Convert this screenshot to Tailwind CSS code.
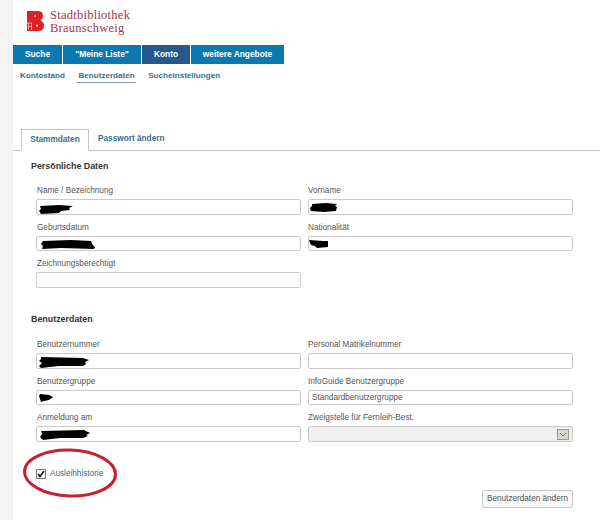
<!DOCTYPE html>
<html lang="de">
<head>
    <meta charset="utf-8" />
    <title>Benutzerdaten</title>
    <script src="https://cdn.jsdelivr.net/npm/@tailwindcss/browser@4"></script>
</head>
<body class="bg-[#f3f3f3] font-['Liberation_Sans',Arial,sans-serif]">
    <div class="relative ml-[13px] w-[587px] h-[520px] overflow-hidden bg-white">
        <!-- Logo -->
        <div class="flex h-[45px] pl-[14px] pt-[9px] gap-[6px]">
            <svg class="mt-[2px]" width="17" height="20" viewBox="0 0 17 20">
                <path fill="#dc2229" d="M0 0H11Q16 0 16 5Q16 8 13.500 9.500Q17 11 17 14.500Q17 20 11 20H0Z" />
                <rect x="7.500" y="4" width="1.500" height="2" fill="#f6b8ba" />
                <path fill="none" stroke="#f8d0d2" stroke-width="0.700" d="M0 12H5M1.500 12V19M4.500 12V19M1.500 15.500H5" />
                <rect x="9" y="13.500" width="2" height="2" fill="#f6b8ba" />
            </svg>
            <div class="font-['Liberation_Serif',serif] text-[12.500px] leading-[13px] tracking-[0.25px] text-[#a03848]">
                <div>Stadtbibliothek</div>
                <div>Braunschweig</div>
            </div>
        </div>

        <!-- Hauptnavigation -->
        <nav class="flex h-[19px] gap-px text-[8.400px] leading-[19px] font-bold text-center text-white">
            <a class="w-[49px] bg-[#0b79b0]">Suche</a>
            <a class="w-[78px] bg-[#0b79b0]">"Meine Liste"</a>
            <a class="w-[48px] bg-[#25598a]">Konto</a>
            <a class="w-[93px] bg-[#0b79b0]">weitere Angebote</a>
        </nav>

        <!-- Unternavigation -->
        <div class="flex h-[65px] pl-[7px] pt-[7px] gap-[12.500px] text-[8.100px] leading-[10px] font-bold text-[#33708f]">
            <a>Kontostand</a>
            <a class="h-[12px] border-b border-[#8a9aa3] px-px">Benutzerdaten</a>
            <a>Sucheinstellungen</a>
        </div>

        <!-- Tabs -->
        <div class="flex h-[22px] pl-[8px] border-b border-[#c4c4c4] text-[8.250px] leading-[20px] font-bold text-[#33708f]">
            <a class="w-[68px] h-[22px] border border-b-white border-[#c4c4c4] text-center">Stammdaten</a>
            <a class="ml-[9px]">Passwort ändern</a>
        </div>

        <section class="pl-[18px] pt-[9px]">
            <h2 class="h-[18px] text-[8.900px] leading-[12px] font-bold text-[#333]">Persönliche Daten</h2>
            <div class="grid grid-cols-[265px_265px] gap-x-[7px] pl-[5px] text-[8.200px] text-[#555]">
                <div class="relative">
                    <label class="block h-[21px] pt-[7px] pl-px leading-[11px]">Name / Bezeichnung</label>
                    <input class="block w-full h-[16px] border border-[#c9c9c9] rounded-[2px] bg-white" type="text" />
                    <svg class="absolute left-[3px] top-[27px]" width="35" height="9" viewBox="0 0 35 9"><path d="M1 1L20 0L34 1L30 3L31 5L22 6L20 8L2 9L0 6L2 4Z" /></svg>
                </div>
                <div class="relative">
                    <label class="block h-[21px] pt-[7px] leading-[11px]">Vorname</label>
                    <input class="block w-full h-[16px] border border-[#c9c9c9] rounded-[2px] bg-white" type="text" />
                    <svg class="absolute left-[2px] top-[25px]" width="28" height="9" viewBox="0 0 28 9"><path d="M2 1L16 0L27 1L25 3L27 4L26 8L14 9L1 8L0 5L2 3Z" /></svg>
                </div>
                <div class="relative">
                    <label class="block h-[21px] pt-[7px] pl-px leading-[11px]">Geburtsdatum</label>
                    <input class="block w-full h-[15px] border border-[#c9c9c9] rounded-[2px] bg-white" type="text" />
                    <svg class="absolute left-[5px] top-[25px]" width="54" height="9" viewBox="0 0 54 9"><path d="M2 1L30 0L50 1L51 4L54 7L53 9L20 8L1 9L2 6L0 4Z" /></svg>
                </div>
                <div class="relative">
                    <label class="block h-[21px] pt-[7px] leading-[11px]">Nationalität</label>
                    <input class="block w-full h-[15px] border border-[#c9c9c9] rounded-[2px] bg-white" type="text" />
                    <svg class="absolute left-px top-[25px]" width="20" height="8" viewBox="0 0 20 8"><path d="M0 0L14 1L19 1L19 7L8 8L6 6L2 5L1 3Z" /></svg>
                </div>
                <div>
                    <label class="block h-[21px] pt-[7px] pl-px leading-[11px]">Zeichnungsberechtigt</label>
                    <input class="block w-full h-[16px] border border-[#c9c9c9] rounded-[2px] bg-white" type="text" />
                </div>
            </div>
        </section>

        <section class="pl-[18px] pt-[26px]">
            <h2 class="h-[18px] text-[8.900px] leading-[11px] font-bold text-[#333]">Benutzerdaten</h2>
            <div class="grid grid-cols-[265px_265px] gap-x-[7px] pl-[5px] text-[8.200px] text-[#555]">
                <div class="relative">
                    <label class="block h-[21px] pt-[7px] pl-px leading-[11px]">Benutzernummer</label>
                    <input class="block w-full h-[16px] border border-[#c9c9c9] rounded-[2px] bg-white" type="text" />
                    <svg class="absolute left-[3px] top-[25px]" width="50" height="11" viewBox="0 0 50 11"><path d="M2 0L44 1L50 3L46 5L47 7L44 9L20 9L2 11L0 9L3 6L0 4L2 2Z" /></svg>
                </div>
                <div>
                    <label class="block h-[21px] pt-[7px] leading-[11px]">Personal Matrikelnummer</label>
                    <input class="block w-full h-[16px] border border-[#c9c9c9] rounded-[2px] bg-white" type="text" />
                </div>
                <div class="relative">
                    <label class="block h-[21px] pt-[7px] pl-px leading-[11px]">Benutzergruppe</label>
                    <input class="block w-full h-[15px] border border-[#c9c9c9] rounded-[2px] bg-white" type="text" />
                    <svg class="absolute left-[3px] top-[25px]" width="14" height="8" viewBox="0 0 14 8"><path d="M1 0L10 1L14 3L10 6L5 7L2 8L1 5L0 2Z" /></svg>
                </div>
                <div>
                    <label class="block h-[21px] pt-[7px] leading-[11px]">InfoGuide Benutzergruppe</label>
                    <input class="block w-full h-[15px] border border-[#c9c9c9] rounded-[2px] bg-white px-[3px] text-[8.200px] text-[#555]" type="text" value="Standardbenutzergruppe" />
                </div>
                <div class="relative">
                    <label class="block h-[21px] pt-[7px] pl-px leading-[11px]">Anmeldung am</label>
                    <input class="block w-full h-[16px] border border-[#c9c9c9] rounded-[2px] bg-white" type="text" />
                    <svg class="absolute left-[4px] top-[25px]" width="50" height="10" viewBox="0 0 50 10"><path d="M1 1L44 0L50 3L46 5L48 6L43 8L20 8L3 10L0 7L2 4Z" /></svg>
                </div>
                <div>
                    <label class="block h-[21px] pt-[7px] leading-[11px]">Zweigstelle für Fernleih-Best.</label>
                    <div class="flex justify-end items-center w-full h-[16px] pr-[3px] border border-[#c9c9c9] rounded-[2px] bg-[#efefef]">
                        <span class="flex items-center justify-center w-[12px] h-[11px] border border-[#9a9a90] bg-[#d8d8d0]">
                            <svg width="8" height="5" viewBox="0 0 8 5"><path d="M1 1L4 4L7 1" fill="none" stroke="#77776f" stroke-width="1" /></svg>
                        </span>
                    </div>
                </div>
            </div>
        </section>

        <!-- Checkbox und Button -->
        <div class="flex items-center gap-[4px] pl-[23px] pt-[26px] h-[37px]">
            <span class="flex items-center justify-center w-[10px] h-[10px] border border-[#777] bg-white">
                <svg width="8" height="8" viewBox="0 0 8 8"><path d="M1 4L3 6.500L7 1" fill="none" stroke="#111" stroke-width="1.600" /></svg>
            </span>
            <span class="text-[8.200px] leading-[11px] text-[#3d6688]">Ausleihhistorie</span>
        </div>
        <div class="flex justify-end w-[560px] pt-[11px]">
            <button class="w-[91px] h-[18px] border border-[#c4c8cc] rounded-[2px] bg-[#f6f8fa] text-[8.200px] leading-[14px] whitespace-nowrap text-[#555]">Benutzerdaten ändern</button>
        </div>

        <!-- rote Markierung -->
        <svg class="absolute left-[8px] top-[446px]" width="100" height="54" viewBox="0 0 100 54">
            <ellipse cx="49" cy="27" rx="45.500" ry="23" fill="none" stroke="#c4222f" stroke-width="3" transform="rotate(2 49 27)" />
        </svg>
    </div>
</body>
</html>
